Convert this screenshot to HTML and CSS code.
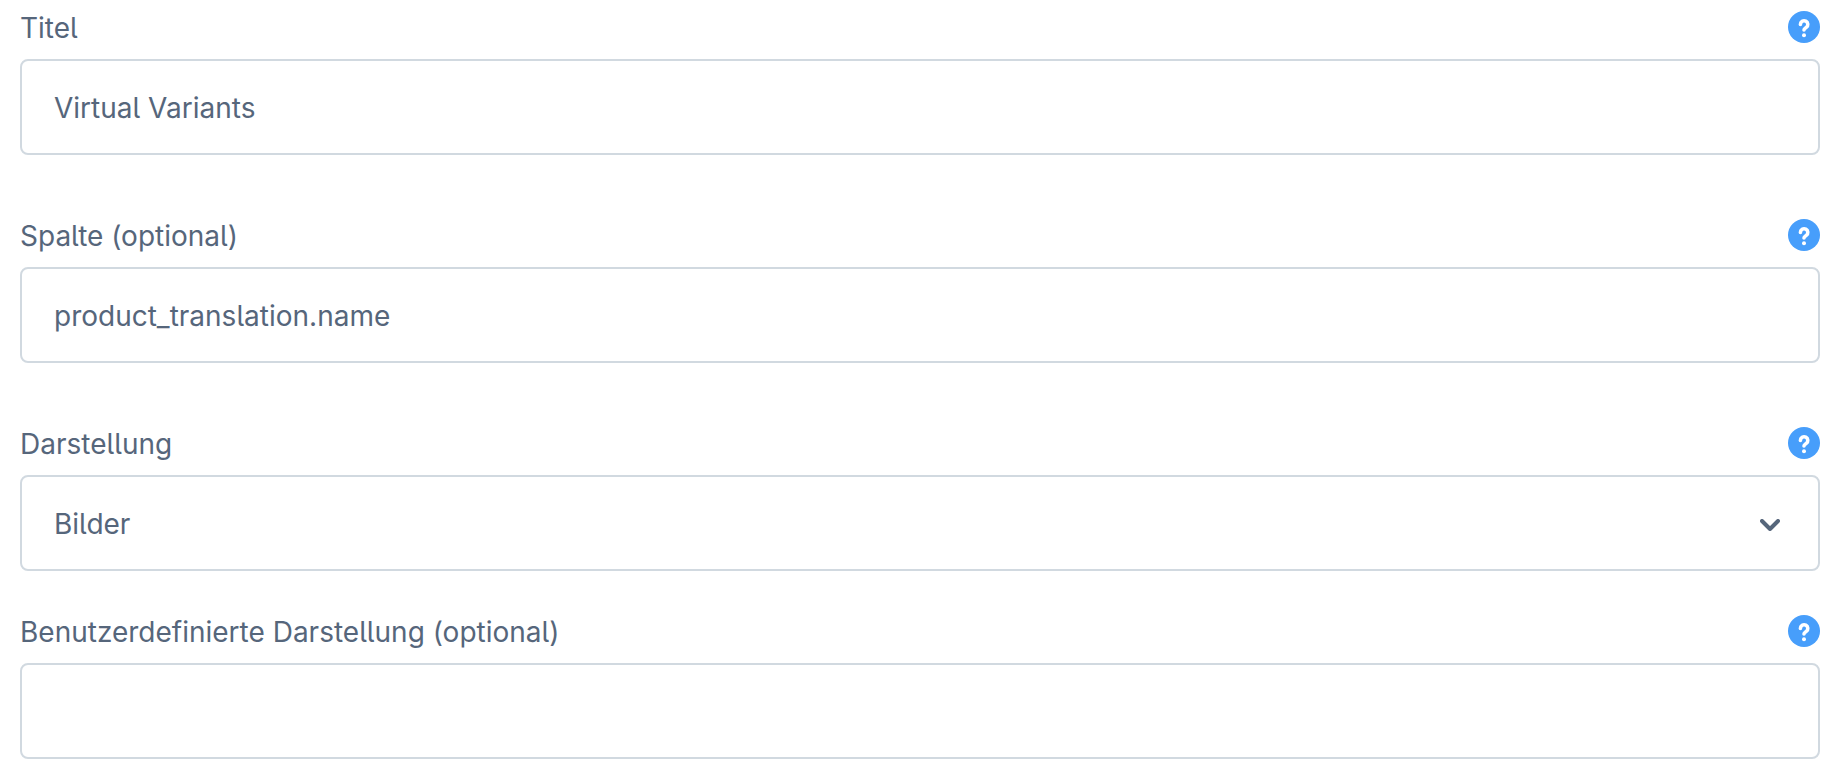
FILE: index.html
```html
<!DOCTYPE html>
<html lang="de">
<head>
  <meta charset="UTF-8">
  <title>Virtual Variants</title>
  <link rel="stylesheet" href="styles.css">
</head>
<body>
  <!-- question mark icon, shared by all help buttons -->
  <svg class="icon-defs" aria-hidden="true">
    <symbol id="icon-help" viewBox="0 0 32 32">
      <circle cx="16" cy="16" r="16" fill="#479efb"/>
      <path d="M12.4 13.4a3.7 3.7 0 1 1 5.9 3c-1.4 1-2.3 1.3-2.3 2.5" fill="none" stroke="#fff" stroke-width="3.6" stroke-linecap="round"/>
      <circle cx="16" cy="24.2" r="2" fill="#fff"/>
    </symbol>
  </svg>

  <form class="settings-form">
    <div class="field">
      <div class="field-header">
        <label for="title">Titel</label>
        <button type="button" class="help" aria-label="Hilfe"><svg><use href="#icon-help"/></svg></button>
      </div>
      <input type="text" id="title" class="control" value="Virtual Variants">
    </div>

    <div class="field">
      <div class="field-header">
        <label for="column">Spalte (optional)</label>
        <button type="button" class="help" aria-label="Hilfe"><svg><use href="#icon-help"/></svg></button>
      </div>
      <input type="text" id="column" class="control" value="product_translation.name" spellcheck="false">
    </div>

    <div class="field field-select">
      <div class="field-header">
        <label for="display">Darstellung</label>
        <button type="button" class="help" aria-label="Hilfe"><svg><use href="#icon-help"/></svg></button>
      </div>
      <div class="select-wrap">
        <select id="display" class="control">
          <option selected>Bilder</option>
        </select>
        <svg class="arrow" viewBox="0 0 20 12" aria-hidden="true">
          <path d="M2 2l8 8 8-8" fill="none" stroke="#56667b" stroke-width="4" stroke-linecap="round" stroke-linejoin="round"/>
        </svg>
      </div>
    </div>

    <div class="field">
      <div class="field-header">
        <label for="custom">Benutzerdefinierte Darstellung (optional)</label>
        <button type="button" class="help" aria-label="Hilfe"><svg><use href="#icon-help"/></svg></button>
      </div>
      <input type="text" id="custom" class="control">
    </div>
  </form>
</body>
</html>
```

FILE: styles.css
```css
* {
  box-sizing: border-box;
}
body {
  margin: 0;
  background-color: #fff;
  color: #56667b;
  font-family: Inter, sans-serif;
  font-size: 28px;
  font-feature-settings: "cv05";
}
.icon-defs {
  display: none;
}
.settings-form {
  padding: 11px 22px 24px 20px;
}
.field {
  margin-bottom: 64px;
}
.field-select {
  margin-bottom: 44px;
}
.field:last-child {
  margin-bottom: 0;
}
.field-header {
  display: flex;
  justify-content: space-between;
  align-items: center;
  height: 32px;
  margin-bottom: 16px;
}
.field-header label {
  padding-top: 2px;
}
.help {
  width: 32px;
  height: 32px;
  padding: 0;
  border: none;
  background: none;
  cursor: pointer;
}
.help svg {
  display: block;
  width: 32px;
  height: 32px;
}
.control {
  display: block;
  width: 100%;
  height: 96px;
  padding: 2px 32px 0;
  border: 2px solid #d1d9e0;
  border-radius: 8px;
  background-color: #fff;
  color: inherit;
  font: inherit;
  font-feature-settings: inherit;
  outline: none;
}
.control:focus {
  border-color: #479efb;
}
.select-wrap {
  position: relative;
}
.select-wrap select {
  appearance: none;
}
/* arrow lies over the select */
.arrow {
  position: absolute;
  top: 44px;
  right: 40px;
  width: 20px;
  height: 12px;
  pointer-events: none;
}
```
